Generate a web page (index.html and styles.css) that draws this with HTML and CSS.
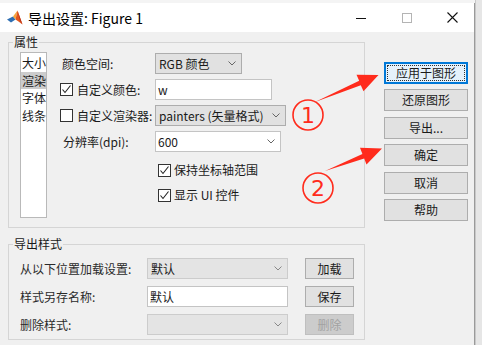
FILE: index.html
```html
<!DOCTYPE html>
<html lang="zh-CN">
<head>
  <meta charset="UTF-8" />
  <meta name="viewport" content="width=device-width, initial-scale=1.0"/>
  <title>导出设置: Figure 1</title>
  <link rel="stylesheet" href="styles.css">
</head>
<body>
<div class="desk">
  <div class="window">
    <!-- title bar -->
    <div class="titlebar">
      <svg class="logo" width="16" height="16" viewBox="0 0 16 16">
        <polygon points="0,9.5 6,6.5 8.5,9.5 4,12.5" fill="#2f6fb3"/>
        <polygon points="6,6.5 10.5,0.5 8.5,9.5" fill="#f6a53a"/>
        <polygon points="10.5,0.5 15.5,14.5 11.5,11.5 8.5,9.5" fill="#e2571e"/>
        <polygon points="10.5,0.5 15.5,14.5 13,11" fill="#b8331b"/>
      </svg>
      <span class="title">导出设置: Figure 1</span>
      <div class="caption">
        <span class="cap">
          <svg width="10" height="10" viewBox="0 0 10 10"><line x1="0" y1="5.5" x2="10" y2="5.5" stroke="#111" stroke-width="1"/></svg>
        </span>
        <span class="cap">
          <svg width="10" height="10" viewBox="0 0 10 10"><rect x="0.5" y="0.5" width="9" height="9" fill="none" stroke="#b4b4b4" stroke-width="1"/></svg>
        </span>
        <span class="cap cap-close">
          <svg width="11" height="11" viewBox="0 0 11 11"><path d="M0.5 0.5 L10.5 10.5 M10.5 0.5 L0.5 10.5" stroke="#111" stroke-width="1.1"/></svg>
        </span>
      </div>
    </div>

    <div class="client">
      <div class="left">
        <!-- Properties -->
        <fieldset class="group props">
          <legend>属性</legend>
          <div class="props-body">
            <ul class="listbox">
              <li>大小</li>
              <li class="sel">渲染</li>
              <li>字体</li>
              <li>线条</li>
            </ul>
            <div class="form">
              <div class="row">
                <span class="label pad2">颜色空间:</span>
                <div class="combo w87">RGB 颜色<svg class="chev" width="8" height="5" viewBox="0 0 8 5"><polyline points="0.5,0.5 4,4 7.5,0.5" fill="none" stroke="#666" stroke-width="1"/></svg></div>
              </div>
              <div class="row">
                <span class="label"><span class="check on"><svg width="11" height="11" viewBox="0 0 11 11"><polyline points="1.5,5.5 4,8.5 9.5,1.5" fill="none" stroke="#222" stroke-width="1.1"/></svg></span>自定义颜色:</span>
                <div class="edit w117">w</div>
              </div>
              <div class="row">
                <span class="label"><span class="check"></span>自定义渲染器:</span>
                <div class="combo w131">painters (矢量格式)<svg class="chev" width="8" height="5" viewBox="0 0 8 5"><polyline points="0.5,0.5 4,4 7.5,0.5" fill="none" stroke="#666" stroke-width="1"/></svg></div>
              </div>
              <div class="row">
                <span class="label pad3">分辨率(dpi):</span>
                <div class="edit combo-edit w126">600<svg class="chev" width="8" height="5" viewBox="0 0 8 5"><polyline points="0.5,0.5 4,4 7.5,0.5" fill="none" stroke="#666" stroke-width="1"/></svg></div>
              </div>
              <div class="check-row first">
                <span class="check on"><svg width="11" height="11" viewBox="0 0 11 11"><polyline points="1.5,5.5 4,8.5 9.5,1.5" fill="none" stroke="#222" stroke-width="1.1"/></svg></span>保持坐标轴范围
              </div>
              <div class="check-row">
                <span class="check on"><svg width="11" height="11" viewBox="0 0 11 11"><polyline points="1.5,5.5 4,8.5 9.5,1.5" fill="none" stroke="#222" stroke-width="1.1"/></svg></span>显示 UI 控件
              </div>
            </div>
          </div>
        </fieldset>

        <!-- Export styles -->
        <fieldset class="group styles">
          <legend>导出样式</legend>
          <div class="style-row">
            <span class="slabel">从以下位置加载设置:</span>
            <div class="combo dim w141">默认<svg class="chev" width="8" height="5" viewBox="0 0 8 5"><polyline points="0.5,0.5 4,4 7.5,0.5" fill="none" stroke="#888" stroke-width="1"/></svg></div>
            <button class="btn small">加载</button>
          </div>
          <div class="style-row">
            <span class="slabel">样式另存名称:</span>
            <div class="edit w141">默认</div>
            <button class="btn small">保存</button>
          </div>
          <div class="style-row">
            <span class="slabel">删除样式:</span>
            <div class="combo dim w141"><svg class="chev" width="8" height="5" viewBox="0 0 8 5"><polyline points="0.5,0.5 4,4 7.5,0.5" fill="none" stroke="#888" stroke-width="1"/></svg></div>
            <button class="btn small disabled">删除</button>
          </div>
        </fieldset>
      </div>

      <div class="buttons">
        <button class="btn focus">应用于图形</button>
        <button class="btn">还原图形</button>
        <button class="btn">导出...</button>
        <button class="btn">确定</button>
        <button class="btn">取消</button>
        <button class="btn">帮助</button>
      </div>
    </div>
  </div>
  <div class="edge"></div>

  <!-- red annotations drawn over the dialog -->
  <svg class="marks" width="482" height="345" viewBox="0 0 482 345">
    <polygon points="315,102 359.2,80.8 356.5,74.7 378.5,75 363.5,91.3 360.8,85.2" fill="#ff2b1c"/>
    <circle cx="308" cy="115" r="15" fill="none" stroke="#ff2b1c" stroke-width="1.6"/>
    <text x="308" y="123" text-anchor="middle" class="num">1</text>
    <polygon points="325,171 362.4,153.9 360,147.8 382,148.5 366.5,164.6 364.2,158.5" fill="#ff2b1c"/>
    <circle cx="318" cy="188" r="15" fill="none" stroke="#ff2b1c" stroke-width="1.6"/>
    <text x="318" y="196" text-anchor="middle" class="num">2</text>
  </svg>
</div>
</body>
</html>
```

FILE: styles.css
```css
body {
  margin: 0;
  font-family: "Noto Sans CJK SC", "Microsoft YaHei", sans-serif;
  font-size: 12px;
  color: #1a1a1a;
  overflow: hidden;
}
.desk {
  position: relative;
  width: 482px;
  height: 345px;
  display: flex;
  background: #f4f4f4;
  overflow: hidden;
}
.window {
  width: 474px;
  margin-top: 3px;
  border-right: 1px solid #9a9a9a;
  display: flex;
  flex-direction: column;
}
.edge {
  flex: 1;
  background: #e6e6e6;
  border-left: 1px solid #c8c8c8;
}

/* title bar */
.titlebar {
  height: 29px;
  background: #fff;
  display: flex;
  align-items: center;
}
.logo {
  margin-left: 7px;
  margin-top: 0px;
}
.title {
  margin-left: 5px;
  font-size: 14px;
  line-height: 18px;
  color: #000;
}
.caption {
  margin-left: auto;
  display: flex;
  height: 100%;
}
.cap {
  width: 46px;
  display: flex;
  align-items: center;
  justify-content: center;
}
.cap-close {
  width: 44px;
}

/* client area */
.client {
  flex: 1;
  background: #f0f0f0;
  display: flex;
  gap: 19px;
  padding: 2px 0 0 8px;
}
.left {
  width: 357px;
  display: flex;
  flex-direction: column;
  gap: 8px;
}
.group {
  margin: 0;
  min-width: 0;
  border: 1px solid #d5d5d5;
  box-sizing: border-box;
  width: 357px;
}
.group legend {
  margin-left: -7px;
  padding: 0 1px;
  font-size: 12px;
  line-height: 16px;
  color: #1a1a1a;
}
.props {
  padding: 2px 10px 9px 11px;
}
.props-body {
  display: flex;
  gap: 13px;
}
.listbox {
  list-style: none;
  margin: 0;
  padding: 1px 0 0 0;
  width: 27px;
  height: 166px;
  box-sizing: border-box;
  background: #fff;
  border: 1px solid #b9b9b9;
}
.listbox li {
  height: 17.5px;
  line-height: 17.5px;
  padding-left: 1px;
  white-space: nowrap;
}
.listbox li.sel {
  background: #cccccc;
}

.form {
  display: flex;
  flex-direction: column;
  gap: 5px;
  padding-top: 1px;
}
.row {
  height: 21px;
  display: flex;
  align-items: center;
}
.label {
  width: 95px;
  display: flex;
  align-items: center;
  line-height: 16px;
  white-space: nowrap;
}
.pad2 { padding-left: 2px; box-sizing: border-box; }
.pad3 { padding-left: 3px; box-sizing: border-box; }

.check {
  width: 13px;
  height: 13px;
  box-sizing: border-box;
  border: 1px solid #333;
  background: #fff;
  margin-right: 4px;
  display: inline-flex;
  align-items: center;
  justify-content: center;
  flex: none;
}
.check-row {
  height: 20px;
  display: flex;
  align-items: center;
  padding-left: 98px;
  line-height: 16px;
}
.check-row .check {
  margin-right: 3px;
}
.check-row.first {
  margin-top: 3px;
}

.combo, .edit {
  height: 100%;
  box-sizing: border-box;
  display: flex;
  align-items: center;
  padding-left: 3px;
  line-height: 16px;
  white-space: nowrap;
}
.combo {
  background: #e1e1e1;
  border: 1px solid #adadad;
}
.edit {
  background: #fff;
  border: 1px solid #c4c4c4;
  padding-left: 2px;
}
.chev {
  margin-left: auto;
  margin-right: 5px;
  flex: none;
}
.w87 { width: 87px; }
.w117 { width: 117px; }
.w131 { width: 131px; }
.w126 { width: 126px; }
.w141 { width: 141px; }

/* export styles group */
.styles {
  padding: 6px 10px 4px 11px;
  display: flex;
  flex-direction: column;
  gap: 7px;
}
.style-row {
  height: 21px;
  display: flex;
  align-items: center;
}
.slabel {
  width: 127px;
  color: #2a2a2a;
  white-space: nowrap;
}
.combo.dim {
  background: #e4e4e4;
  border-color: #cccccc;
}

/* buttons */
.btn {
  font-family: inherit;
  font-size: 12px;
  color: #1a1a1a;
  width: 84px;
  height: 22px;
  padding: 0;
  background: #e1e1e1;
  border: 1px solid #adadad;
  line-height: 16px;
  position: relative;
}
.btn.small {
  width: 49px;
  height: 21px;
  margin-left: 17px;
}
.btn.disabled {
  background: #cccccc;
  border-color: #bfbfbf;
  color: #a2a2a2;
}
.btn.focus {
  background: #e5f1fb;
  border: 2px solid #0078d7;
}
.btn.focus::after {
  content: "";
  position: absolute;
  inset: 1px;
  border: 1px dotted #333;
}
.buttons {
  display: flex;
  flex-direction: column;
  gap: 5.4px;
  padding-top: 28px;
}

/* annotations */
.marks {
  position: absolute;
  left: 0;
  top: 0;
  pointer-events: none;
}
.num {
  font-family: "DejaVu Sans", sans-serif;
  font-size: 22px;
  fill: #ff2b1c;
}
```
